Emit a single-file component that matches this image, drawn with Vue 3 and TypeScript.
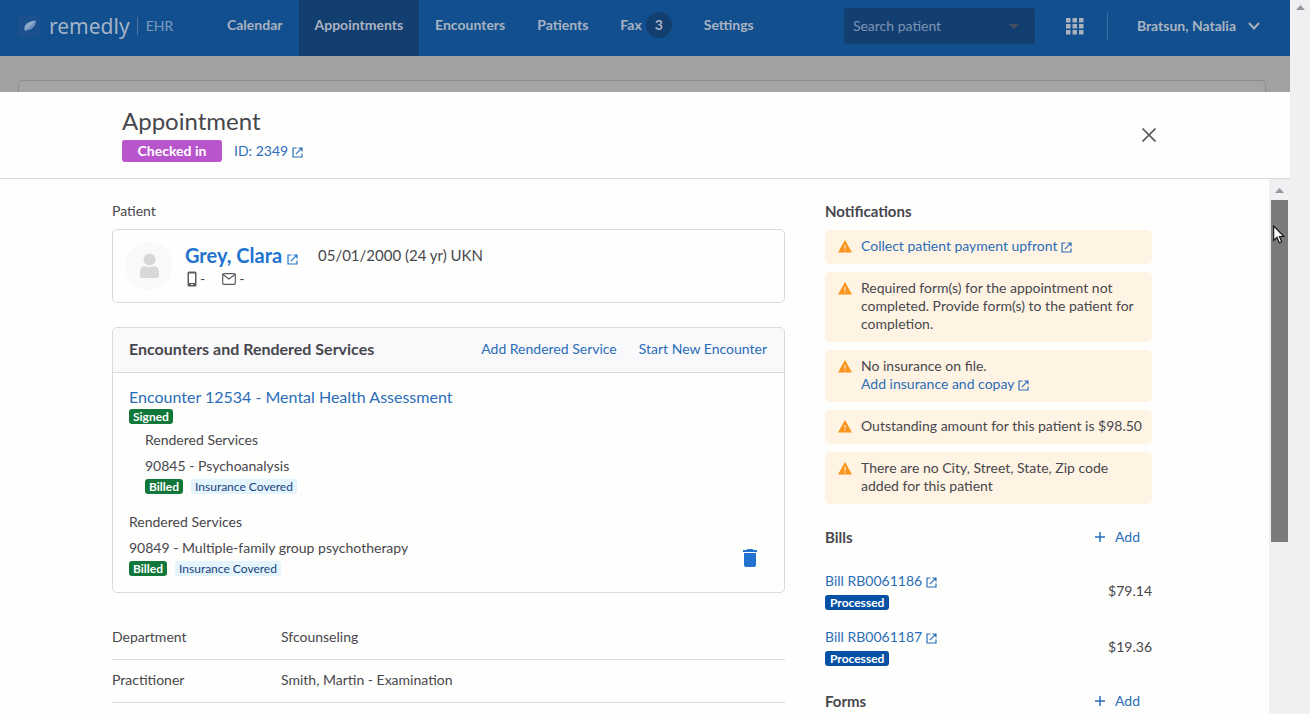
<script setup lang="ts">
import { h, type FunctionalComponent } from 'vue'

interface NavItem { label: string; active?: boolean; count?: number }
interface Notice { text?: string; link?: string }
interface Bill { id: string; status: string; amount: string }

const nav: NavItem[] = [
  { label: 'Calendar' },
  { label: 'Appointments', active: true },
  { label: 'Encounters' },
  { label: 'Patients' },
  { label: 'Fax', count: 3 },
  { label: 'Settings' },
]

const notices: Notice[] = [
  { link: 'Collect patient payment upfront' },
  { text: 'Required form(s) for the appointment not completed. Provide form(s) to the patient for completion.' },
  { text: 'No insurance on file.', link: 'Add insurance and copay' },
  { text: 'Outstanding amount for this patient is $98.50' },
  { text: 'There are no City, Street, State, Zip code added for this patient' },
]

const bills: Bill[] = [
  { id: 'Bill RB0061186', status: 'Processed', amount: '$79.14' },
  { id: 'Bill RB0061187', status: 'Processed', amount: '$19.36' },
]

const details = [
  { term: 'Department', value: 'Sfcounseling' },
  { term: 'Practitioner', value: 'Smith, Martin - Examination' },
]

const OpenIcon: FunctionalComponent = () =>
  h('svg', { viewBox: '0 0 12 12', width: 11, height: 11, fill: 'none', stroke: 'currentColor', 'stroke-width': 1.3, 'aria-hidden': 'true' }, [
    h('path', { d: 'M5 1.1H1.1V10.9H10.9V7M7 1.1H10.9V5M10.7 1.3L4.2 7.8' }),
  ])
</script>

<template>
  <div class="screen">
    <div class="page">
      <header class="topbar">
        <a class="brand" href="#">
          <svg class="leaf" viewBox="0 0 24 24" width="24" height="24" aria-hidden="true">
            <rect x="0" y="1" width="23" height="22" rx="4" fill="#1c4f8d" />
            <path d="M6.500 16.500C5.500 11 9 7.500 17.500 6.500C18 12 14 16.500 6.500 16.500Z" fill="#8fa9c9" />
            <path d="M6.500 16.500C9 15 13 12 17.500 6.500C18 12 14 16.500 6.500 16.500Z" fill="#6a90bf" />
          </svg>
          <span class="brand-name">remedly</span>
          <span class="brand-sub">EHR</span>
        </a>
        <nav class="nav">
          <a v-for="item in nav" :key="item.label" href="#" :class="{ active: item.active }">
            {{ item.label }}<span v-if="item.count" class="count">{{ item.count }}</span>
          </a>
        </nav>
        <div class="search">
          <input type="text" placeholder="Search patient" aria-label="Search patient" />
          <svg viewBox="0 0 10 5" width="10" height="5" aria-hidden="true"><path d="M0 0H10L5 5Z" fill="#45505f" /></svg>
        </div>
        <button class="apps" type="button" aria-label="Applications">
          <svg viewBox="0 0 18 17" width="18" height="17" fill="#a9b1bd">
            <path d="M0 0h4.500v4.500H0zM6.500 0H11v4.500H6.500zM13 0h4.500v4.500H13zM0 6h4.500v4.500H0zM6.500 6H11v4.500H6.500zM13 6h4.500v4.500H13zM0 12h4.500v4.500H0zM6.500 12H11v4.500H6.500zM13 12h4.500v4.500H13z" />
          </svg>
        </button>
        <button class="user" type="button">
          Bratsun, Natalia
          <svg viewBox="0 0 12 8" width="12" height="8" fill="none" stroke="#a9b1bd" stroke-width="2" aria-hidden="true"><path d="M1 1L6 6.500L11 1" /></svg>
        </button>
      </header>

      <div class="backdrop"><div class="backdrop-card"></div></div>

      <section class="modal" role="dialog" aria-labelledby="modal-title">
        <header class="modal-head">
          <div>
            <h1 id="modal-title">Appointment</h1>
            <div class="modal-meta">
              <span class="state">Checked in</span>
              <a href="#" class="with-icon">ID: 2349 <OpenIcon /></a>
            </div>
          </div>
          <button class="close" type="button" aria-label="Close">
            <svg viewBox="0 0 14 14" width="14" height="14" fill="none" stroke="#5c5c64" stroke-width="1.700"><path d="M0.500 0.500L13.500 13.500M13.500 0.500L0.500 13.500" /></svg>
          </button>
        </header>

        <div class="modal-body">
          <div class="columns">
            <div class="main-col">
              <h2 class="label">Patient</h2>
              <div class="card patient">
                <svg class="avatar" viewBox="0 0 48 48" width="48" height="48" aria-hidden="true">
                  <circle cx="24" cy="24" r="24" fill="#f9f9fc" />
                  <circle cx="24.500" cy="17.500" r="6" fill="#d8d8da" />
                  <path d="M15 34V29.500C15 26.500 17 24.500 19.500 24C22 25.300 27 25.300 29.500 24C32 24.500 34 26.500 34 29.500V34Q34 36 32 36H17Q15 36 15 34Z" fill="#d8d8da" />
                </svg>
                <div>
                  <div class="patient-top">
                    <a href="#" class="patient-name with-icon">Grey, Clara <OpenIcon /></a>
                    <span class="patient-info">05/01/2000 (24 yr) UKN</span>
                  </div>
                  <div class="contacts">
                    <span>
                      <svg viewBox="0 0 10 16" width="10" height="16" aria-hidden="true"><path fill-rule="evenodd" fill="#5d5a63" d="M2 0.500H8Q9.500 0.500 9.500 2V14Q9.500 15.500 8 15.500H2Q0.500 15.500 0.500 14V2Q0.500 0.500 2 0.500ZM2 2.500V12H8V2.500ZM4 13V14H6V13Z" /></svg>-
                    </span>
                    <span>
                      <svg viewBox="0 0 14 12" width="14" height="12" fill="none" stroke="#5d5a63" stroke-width="1.200" aria-hidden="true"><rect x="0.700" y="0.700" width="12.600" height="10.600" rx="1" /><path d="M1 1.500L7 6L13 1.500" /></svg>-
                    </span>
                  </div>
                </div>
              </div>

              <section class="card services">
                <header class="services-head">
                  <h2>Encounters and Rendered Services</h2>
                  <div class="actions">
                    <button type="button">Add Rendered Service</button>
                    <button type="button">Start New Encounter</button>
                  </div>
                </header>
                <div class="services-body">
                  <a href="#" class="encounter">Encounter 12534 - Mental Health Assessment</a>
                  <div class="tags"><span class="tag green">Signed</span></div>
                  <div class="group nested">
                    <h3>Rendered Services</h3>
                    <p>90845 - Psychoanalysis</p>
                    <div class="tags"><span class="tag green">Billed</span><span class="tag sky">Insurance Covered</span></div>
                  </div>
                  <div class="group with-action">
                    <div>
                      <h3>Rendered Services</h3>
                      <p>90849 - Multiple-family group psychotherapy</p>
                      <div class="tags"><span class="tag green">Billed</span><span class="tag sky">Insurance Covered</span></div>
                    </div>
                    <button type="button" class="trash" aria-label="Delete service">
                      <svg viewBox="0 0 14 18" width="14" height="18" fill="#2273d0"><path d="M0 1H3.500L4.500 0H9.500L10.500 1H14V3H0ZM1 4H13V16Q13 18 11 18H3Q1 18 1 16Z" /></svg>
                    </button>
                  </div>
                </div>
              </section>

              <dl class="details">
                <div v-for="row in details" :key="row.term">
                  <dt>{{ row.term }}</dt>
                  <dd>{{ row.value }}</dd>
                </div>
              </dl>
            </div>

            <aside class="side-col">
              <h2>Notifications</h2>
              <ul class="notices">
                <li v-for="(n, i) in notices" :key="i">
                  <svg viewBox="0 0 14 13" width="14" height="13" aria-hidden="true">
                    <path d="M7 0L14 12.500H0Z" fill="#fa941c" />
                    <path d="M6.400 5H7.600V8.500H6.400ZM6.400 9.500H7.600V10.700H6.400Z" fill="#fff0dc" />
                  </svg>
                  <div>
                    <div v-if="n.text">{{ n.text }}</div>
                    <a v-if="n.link" href="#" class="with-icon">{{ n.link }} <OpenIcon /></a>
                  </div>
                </li>
              </ul>

              <div class="side-head">
                <h2>Bills</h2>
                <button type="button" class="add">
                  <svg viewBox="0 0 12 12" width="12" height="12" stroke="currentColor" stroke-width="1.500" aria-hidden="true"><path d="M6 1V11M1 6H11" /></svg>Add
                </button>
              </div>
              <ul class="bills">
                <li v-for="b in bills" :key="b.id">
                  <div>
                    <a href="#" class="with-icon">{{ b.id }} <OpenIcon /></a>
                    <div class="tags"><span class="tag blue">{{ b.status }}</span></div>
                  </div>
                  <span>{{ b.amount }}</span>
                </li>
              </ul>

              <div class="side-head">
                <h2>Forms</h2>
                <button type="button" class="add">
                  <svg viewBox="0 0 12 12" width="12" height="12" stroke="currentColor" stroke-width="1.500" aria-hidden="true"><path d="M6 1V11M1 6H11" /></svg>Add
                </button>
              </div>
            </aside>
          </div>
          <div class="scrollbar inner" aria-hidden="true">
            <svg viewBox="0 0 9 5" width="9" height="5"><path d="M4.500 0L9 5H0Z" fill="#98989c" /></svg>
            <div class="thumb"></div>
            <svg class="cursor" viewBox="0 0 12 19" width="12" height="19">
              <path d="M0.700 1V15.500L4 12.300L6.300 17.800L8.700 16.800L6.400 11.500H11Z" fill="#fff" stroke="#111" stroke-width="1.100" />
            </svg>
          </div>
        </div>
      </section>
    </div>
    <div class="scrollbar" aria-hidden="true">
      <svg viewBox="0 0 9 5" width="9" height="5"><path d="M4.500 0L9 5H0Z" fill="#98989c" /></svg>
    </div>
  </div>
</template>

<style>
body {
  margin: 0;
  overflow: hidden;
}
</style>

<style scoped>
* {
  box-sizing: border-box;
}
.screen {
  display: flex;
  height: 100vh;
  overflow: hidden;
  font: 14px/18px Lato, sans-serif;
  color: #47474d;
  background: #fefefd;
}
.page {
  flex: 1;
  min-width: 0;
  display: flex;
  flex-direction: column;
}
h1, h2, h3, p, ul, dl, dd {
  margin: 0;
  padding: 0;
}
ul {
  list-style: none;
}
a {
  color: #2a6db8;
  text-decoration: none;
}
button {
  font: inherit;
  color: #2a6db8;
  background: none;
  border: 0;
  padding: 0;
}
svg {
  flex: none;
}

.topbar {
  height: 56px;
  flex: none;
  display: flex;
  align-items: center;
  padding: 0 30px 4px 18px;
  background: #124f8e;
}
.brand {
  display: flex;
  align-items: center;
  width: 193px;
  flex: none;
  color: #a3b3c7;
}
.brand-name {
  margin-left: 7px;
  font: 21px/24px "Noto Sans", sans-serif;
}
.brand-sub {
  margin-left: 7px;
  padding-left: 8px;
  border-left: 1px solid #4a76a6;
  color: #7f9cc0;
}
.nav {
  display: flex;
  align-self: stretch;
  margin-bottom: -4px;
}
.nav a {
  display: flex;
  align-items: center;
  padding: 0 16px 6px;
  color: #a9b3c1;
  font-weight: 700;
}
.nav a.active {
  background: #133e70;
}
.count {
  width: 26px;
  height: 26px;
  margin-left: 4px;
  border-radius: 50%;
  background: #133e70;
  line-height: 26px;
  text-align: center;
}
.search {
  display: flex;
  align-items: center;
  width: 191px;
  height: 36px;
  margin-left: auto;
  padding: 0 16px 0 9px;
  border-radius: 3px;
  background: #133e70;
}
.search input {
  flex: 1;
  min-width: 0;
  padding: 0;
  border: 0;
  background: none;
  font: inherit;
}
.search input::placeholder {
  color: #7c95b3;
  opacity: 1;
}
.apps {
  display: flex;
  margin-left: 31px;
  padding-right: 23px;
  height: 28px;
  align-items: center;
  border-right: 1px solid #3c6da3;
}
.user {
  display: flex;
  align-items: center;
  gap: 12px;
  margin-left: 29px;
  color: #a9b3c1;
  font-weight: 700;
}

.backdrop {
  height: 36px;
  flex: none;
  padding: 24px 24px 0 18px;
  background: #a1a1a3;
}
.backdrop-card {
  height: 100%;
  border: 1px solid #8c8c8e;
  border-bottom: 0;
  border-radius: 5px 5px 0 0;
  background: #a4a4a2;
}

.modal {
  flex: 1;
  min-height: 0;
  display: flex;
  flex-direction: column;
  background: #fefefd;
}
.modal-head {
  display: flex;
  align-items: center;
  justify-content: space-between;
  flex: none;
  padding: 15px 134px 16px 122px;
  border-bottom: 1px solid #d9d9db;
}
h1 {
  font-size: 24px;
  line-height: 28px;
  font-weight: 400;
}
.modal-meta {
  display: flex;
  align-items: center;
  gap: 12px;
  margin-top: 5px;
}
.state {
  width: 100px;
  border-radius: 3px;
  background: #b955cc;
  color: #fff;
  font-weight: 700;
  line-height: 22px;
  text-align: center;
}
.close {
  display: flex;
}
.with-icon svg {
  vertical-align: -2px;
}

.modal-body {
  flex: 1;
  min-height: 0;
  display: flex;
}
.columns {
  flex: 1;
  min-width: 0;
  display: flex;
  gap: 40px;
  padding: 23px 117px 0 112px;
  overflow: hidden;
}
.main-col {
  flex: 1;
  min-width: 0;
}
.side-col {
  width: 327px;
  flex: none;
}
.label {
  font-size: 14px;
  font-weight: 400;
}
.card {
  border: 1px solid #d9d9dc;
  border-radius: 5px;
}
.patient {
  display: flex;
  gap: 12px;
  margin-top: 9px;
  padding: 12px;
}
.patient-top {
  display: flex;
  align-items: center;
  gap: 20px;
}
.patient-name {
  font-size: 20px;
  line-height: 26px;
  color: #2273d0;
  font-weight: 700;
}
.patient-info {
  font-size: 15px;
}
.contacts {
  display: flex;
  gap: 17px;
  padding: 2px 0 0 2px;
}
.contacts span {
  display: flex;
  align-items: center;
  gap: 3px;
}
.services {
  margin-top: 24px;
  overflow: hidden;
}
.services-head {
  display: flex;
  align-items: center;
  justify-content: space-between;
  padding: 12px 17px 14px 16px;
  border-bottom: 1px solid #d9d9dc;
  background: #f9f9fc;
}
.services-head h2,
.side-col h2 {
  font-size: 15px;
  font-weight: 700;
}
.services-head h2 {
  font-size: 16px;
}
.actions {
  display: flex;
  gap: 22px;
}
.services-body {
  padding: 15px 16px 16px;
}
.encounter {
  display: block;
  font-size: 16px;
}
.tags {
  display: flex;
  gap: 8px;
}
.tag {
  padding: 0 4px;
  border-radius: 3px;
  font-size: 12px;
  line-height: 15px;
  font-weight: 700;
  color: #fff;
}
.green {
  background: #11773a;
}
.blue {
  padding: 0 5px;
  background: #0650a5;
}
.sky {
  background: #e3f4fd;
  color: #17437c;
  font-weight: 400;
}
.encounter + .tags {
  margin-top: 3px;
}
.group h3 {
  font-size: 14px;
  font-weight: 400;
  margin-bottom: 8px;
}
.group .tags {
  margin-top: 4px;
}
.nested {
  margin: 7px 0 19px;
  padding-left: 16px;
}
.with-action {
  display: flex;
  align-items: flex-end;
  justify-content: space-between;
}
.trash {
  display: flex;
  margin: 0 11px 9px 0;
}
.details {
  margin-top: 24px;
}
.details div {
  display: flex;
  padding: 11px 0 13px;
  border-bottom: 1px solid #d9d9dc;
}
.details dt {
  width: 169px;
}

.notices {
  display: grid;
  gap: 8px;
  margin: 10px 0 24px;
}
.notices li {
  display: flex;
  gap: 9px;
  padding: 7px 8px 9px 13px;
  border-radius: 5px;
  background: #fff4e3;
}
.notices li > svg {
  margin-top: 3px;
}
.side-head {
  display: flex;
  align-items: center;
  justify-content: space-between;
  padding-right: 12px;
}
.add {
  display: flex;
  align-items: center;
  gap: 9px;
}
.bills {
  margin: 17px 0;
}
.bills li {
  display: flex;
  align-items: center;
  justify-content: space-between;
  padding: 9px 0;
}
.bills .tags {
  margin-top: 5px;
}

.scrollbar {
  width: 20px;
  flex: none;
  padding-top: 5px;
  background: #f0f0f3;
}
.scrollbar > svg:first-child {
  display: block;
  margin: 0 auto;
}
.inner {
  position: relative;
  width: 21px;
  padding: 9px 2px 0;
}
.thumb {
  height: 65%;
  margin-top: 7px;
  background: #7b7b7d;
}
.cursor {
  position: absolute;
  left: 4px;
  top: 46px;
}
</style>
